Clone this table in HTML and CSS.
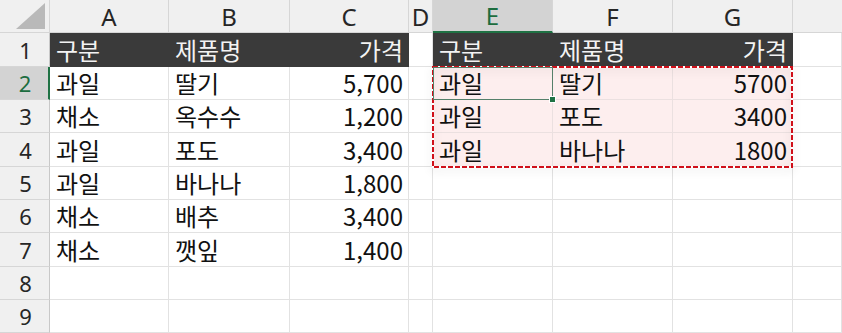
FILE: index.html
```html
<!DOCTYPE html>
<html lang="ko">
<head>
<meta charset="utf-8">
<link rel="stylesheet" href="styles.css">
</head>
<body>
<div class="sheet">
  <div class="grid">
    <div class="hd corner"><svg class="tri" width="49" height="33" viewBox="0 0 49 33"><polygon points="45,3 45,29 16,29" fill="#b9b9b9"/></svg></div>
    <div class="hd col">A</div>
    <div class="hd col">B</div>
    <div class="hd col">C</div>
    <div class="hd col">D</div>
    <div class="hd col sel-col">E</div>
    <div class="hd col">F</div>
    <div class="hd col">G</div>
    <div class="hd col last"></div>

    <div class="hd row">1</div>
    <div class="c dark">구분</div>
    <div class="c dark">제품명</div>
    <div class="c dark num">가격</div>
    <div class="c"></div>
    <div class="c dark">구분</div>
    <div class="c dark">제품명</div>
    <div class="c dark num">가격</div>
    <div class="c"></div>

    <div class="hd row sel-row">2</div>
    <div class="c">과일</div>
    <div class="c">딸기</div>
    <div class="c num">5,700</div>
    <div class="c"></div>
    <div class="c pink">과일</div>
    <div class="c pink">딸기</div>
    <div class="c pink num">5700</div>
    <div class="c"></div>

    <div class="hd row">3</div>
    <div class="c">채소</div>
    <div class="c">옥수수</div>
    <div class="c num">1,200</div>
    <div class="c"></div>
    <div class="c pink">과일</div>
    <div class="c pink">포도</div>
    <div class="c pink num">3400</div>
    <div class="c"></div>

    <div class="hd row">4</div>
    <div class="c">과일</div>
    <div class="c">포도</div>
    <div class="c num">3,400</div>
    <div class="c"></div>
    <div class="c pink">과일</div>
    <div class="c pink">바나나</div>
    <div class="c pink num">1800</div>
    <div class="c"></div>

    <div class="hd row">5</div>
    <div class="c">과일</div>
    <div class="c">바나나</div>
    <div class="c num">1,800</div>
    <div class="c"></div>
    <div class="c"></div>
    <div class="c"></div>
    <div class="c"></div>
    <div class="c"></div>

    <div class="hd row">6</div>
    <div class="c">채소</div>
    <div class="c">배추</div>
    <div class="c num">3,400</div>
    <div class="c"></div>
    <div class="c"></div>
    <div class="c"></div>
    <div class="c"></div>
    <div class="c"></div>

    <div class="hd row">7</div>
    <div class="c">채소</div>
    <div class="c">깻잎</div>
    <div class="c num">1,400</div>
    <div class="c"></div>
    <div class="c"></div>
    <div class="c"></div>
    <div class="c"></div>
    <div class="c"></div>

    <div class="hd row">8</div>
    <div class="c"></div>
    <div class="c"></div>
    <div class="c"></div>
    <div class="c"></div>
    <div class="c"></div>
    <div class="c"></div>
    <div class="c"></div>
    <div class="c"></div>

    <div class="hd row">9</div>
    <div class="c"></div>
    <div class="c"></div>
    <div class="c"></div>
    <div class="c"></div>
    <div class="c"></div>
    <div class="c"></div>
    <div class="c"></div>
    <div class="c"></div>
  </div>

  <svg class="copy-range" width="362" height="104" viewBox="0 0 362 104">
    <rect x="1" y="1" width="359" height="100" fill="none" stroke="#ffffff" stroke-width="2"/>
    <rect x="1" y="1" width="359" height="100" fill="none" stroke="#d0101a" stroke-width="2" stroke-dasharray="5 2"/>
  </svg>
  <div class="active-cell"><span class="handle"></span></div>
</div>
</body>
</html>
```

FILE: styles.css
```css
html, body {
  margin: 0;
  padding: 0;
  background: #ffffff;
  overflow: hidden;
}

.sheet {
  position: relative;
  width: 842px;
  height: 333px;
}

.grid {
  display: grid;
  grid-template-columns: 50px 119px 121px 119px 24px 120px 120px 120px 49px;
  grid-template-rows: 33px 34px 33px 33px 34px 33px 33px 34px 33px 33px;
}

.hd {
  box-sizing: border-box;
  background: #f0f0f0;
  border-right: 1px solid #d6d6d6;
  border-bottom: 1px solid #d6d6d6;
  font-family: "Noto Sans", "Liberation Sans", sans-serif;
  font-size: 24px;
  color: #262626;
  display: flex;
  align-items: center;
  justify-content: center;
}

.corner {
  position: relative;
  padding: 0;
}

.tri {
  display: block;
}

.col {
  line-height: 33px;
}

.col.last {
  border-right: none;
}

.row {
  font-size: 22px;
  border-right: 1px solid #c8c8c8;
  padding-left: 2px;
}

.sel-col {
  background: #d3d3d3;
  color: #1c6d3f;
  border-bottom: 2px solid #1f7244;
}

.sel-row {
  background: #d3d3d3;
  color: #1c6d3f;
  border-right: 2px solid #1f7244;
}

.c {
  box-sizing: border-box;
  border-right: 1px solid #e2e2e2;
  border-bottom: 1px solid #e2e2e2;
  font-family: "Noto Sans CJK KR", "Noto Sans", sans-serif;
  font-size: 24px;
  color: #111111;
  padding: 0 5px 0 6px;
  display: flex;
  align-items: center;
  white-space: nowrap;
  line-height: 30px;
}

.c.num {
  justify-content: flex-end;
}

.c.dark {
  background: #3a3a3a;
  color: #f3f3f3;
  border-right-color: #3a3a3a;
  border-bottom-color: #3a3a3a;
}

.c.pink {
  background: #fdeeee;
  border-right-color: #ebe0e0;
  border-bottom-color: #ebe0e0;
}

.copy-range {
  position: absolute;
  left: 432px;
  top: 66px;
  filter: drop-shadow(0 3px 4px rgba(0, 0, 0, 0.12));
}

.active-cell {
  position: absolute;
  left: 433px;
  top: 67px;
  width: 120px;
  height: 33px;
  box-sizing: border-box;
  border: 1px solid #55806a;
}

.handle {
  position: absolute;
  right: -4px;
  bottom: -4px;
  width: 5px;
  height: 5px;
  background: #1f7244;
  border: 1px solid #ffffff;
}
```
